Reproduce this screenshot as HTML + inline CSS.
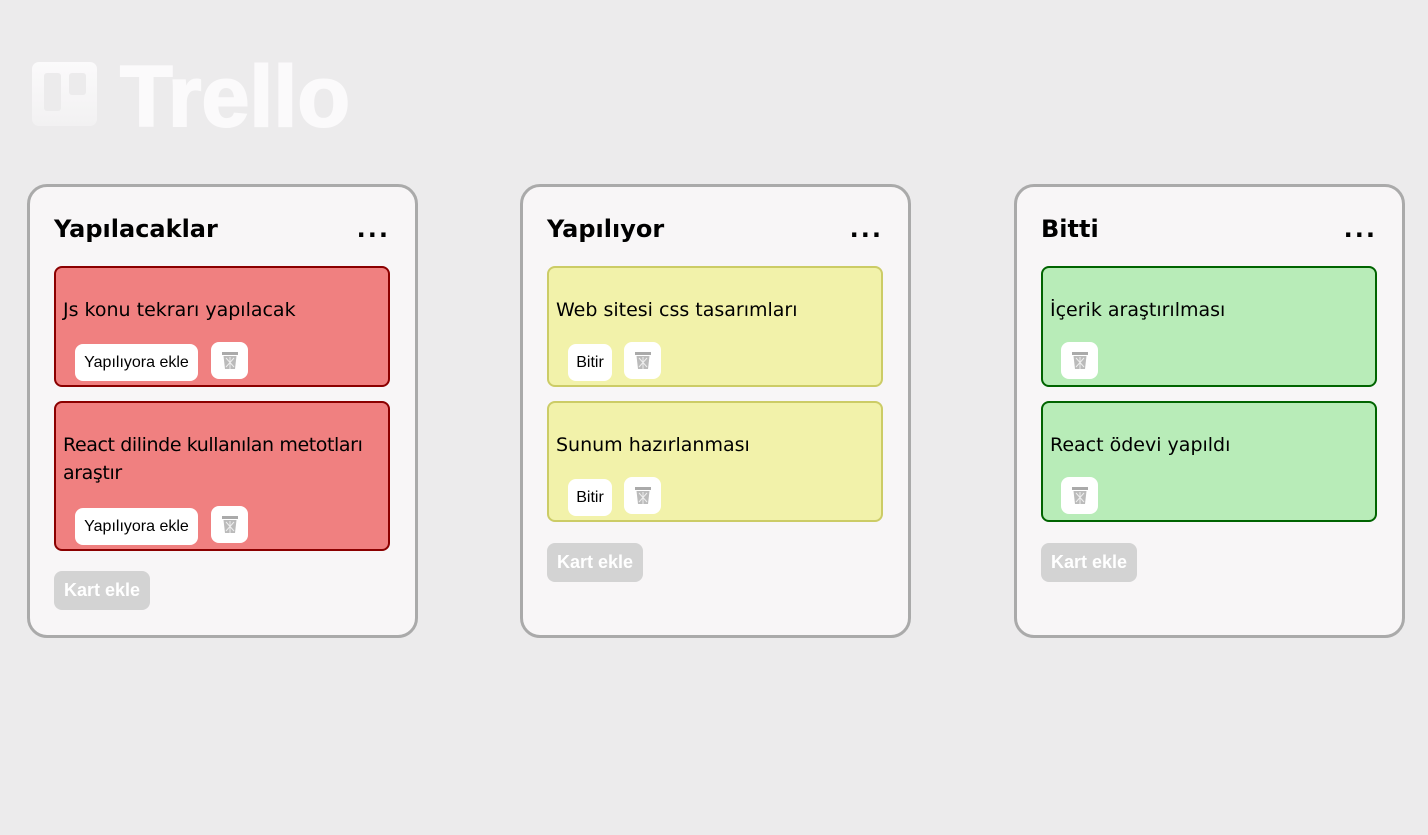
<!DOCTYPE html>
<html><head><meta charset="utf-8"><style>
body{margin:0;width:1428px;height:835px;background:#ecebec;font-family:"Comic Sans MS","DejaVu Sans","Liberation Sans",sans-serif;position:relative;overflow:hidden}
.logo{position:absolute;left:32px;top:62px}
.col{position:absolute;top:184px;width:385px;height:448px;border:3px solid #aaa;border-radius:20px;background:#f8f6f7}
.title{position:absolute;left:24px;top:28px;font-size:24px;font-weight:bold;color:#000}
.dots{position:absolute;right:25px;top:28px;font-size:24px;letter-spacing:2px;font-weight:bold}
.card{position:absolute;left:24px;width:336px;border:2px solid;border-radius:8px;box-sizing:border-box}
.card .t{position:absolute;left:7px;top:28px;font-size:19px;line-height:28px;right:0;white-space:nowrap}
.btn{position:absolute;height:37px;background:#fff;border-radius:8px;font-family:"Liberation Sans",sans-serif;font-size:16px;line-height:37px;text-align:center;color:#000}
.trash{width:37px}
.trash svg{margin-top:9px}
.red{background:#f08080;border-color:#8b0000}
.yel{background:#f2f2aa;border-color:#cccc66}
.grn{background:#b8ecb8;border-color:#006400}
.add{position:absolute;left:24px;height:39px;width:96px;background:#d3d3d3;border-radius:8px;color:#fff;font-family:"Liberation Sans",sans-serif;font-weight:bold;font-size:18px;line-height:39px;text-align:center}
</style></head><body>
<svg class="logo" width="330" height="70" viewBox="0 0 330 70">
<defs><linearGradient id="g" x1="0" y1="0" x2="0" y2="1"><stop offset="0" stop-color="#fbfafb"/><stop offset="1" stop-color="#f2f1f2"/></linearGradient></defs>
<rect x="0" y="0" width="65" height="64" rx="7" fill="url(#g)"/>
<rect x="12" y="11" width="17" height="38" rx="3" fill="#ecebec"/>
<rect x="37" y="11" width="17" height="22" rx="3" fill="#ecebec"/>
<text x="88" y="64" font-family="Liberation Sans,sans-serif" font-weight="bold" font-size="86" fill="#fbfafb" stroke="#fbfafb" stroke-width="2" textLength="230" lengthAdjust="spacingAndGlyphs">Trello</text>
</svg>

<div class="col" style="left:27px">
<div class="title">Yapılacaklar</div><div class="dots">...</div>
<div class="card red" style="top:79px;height:121px"><div class="t">Js konu tekrarı yapılacak</div>
<div class="btn" style="left:19px;top:76px;width:123px">Yapılıyora ekle</div><div class="btn trash" style="left:155px;top:74px">TRASH</div></div>
<div class="card red" style="top:214px;height:150px"><div class="t" style="letter-spacing:-0.4px">React dilinde kullanılan metotları<br>araştır</div>
<div class="btn" style="left:19px;top:105px;width:123px">Yapılıyora ekle</div><div class="btn trash" style="left:155px;top:103px">TRASH</div></div>
<div class="add" style="top:384px">Kart ekle</div>
</div>

<div class="col" style="left:520px">
<div class="title">Yapılıyor</div><div class="dots">...</div>
<div class="card yel" style="top:79px;height:121px"><div class="t">Web sitesi css tasarımları</div>
<div class="btn" style="left:19px;top:76px;width:44px">Bitir</div><div class="btn trash" style="left:75px;top:74px">TRASH</div></div>
<div class="card yel" style="top:214px;height:121px"><div class="t">Sunum hazırlanması</div>
<div class="btn" style="left:19px;top:76px;width:44px">Bitir</div><div class="btn trash" style="left:75px;top:74px">TRASH</div></div>
<div class="add" style="top:356px">Kart ekle</div>
</div>

<div class="col" style="left:1014px">
<div class="title">Bitti</div><div class="dots">...</div>
<div class="card grn" style="top:79px;height:121px"><div class="t">İçerik araştırılması</div>
<div class="btn trash" style="left:18px;top:74px">TRASH</div></div>
<div class="card grn" style="top:214px;height:121px"><div class="t">React ödevi yapıldı</div>
<div class="btn trash" style="left:18px;top:74px">TRASH</div></div>
<div class="add" style="top:356px">Kart ekle</div>
</div>
<script>
document.querySelectorAll('.trash').forEach(e=>{e.innerHTML='<svg width="18" height="19" viewBox="0 0 18 19"><rect x="1" y="1" width="16" height="3" fill="#aaa"/><path d="M2.5 5h13l-1.5 13h-10z" fill="#bbb"/><path d="M5 7l8 9M13 7l-8 9M9 6v12" stroke="#eee" stroke-width="1"/></svg>'});
</script>
</body></html>
